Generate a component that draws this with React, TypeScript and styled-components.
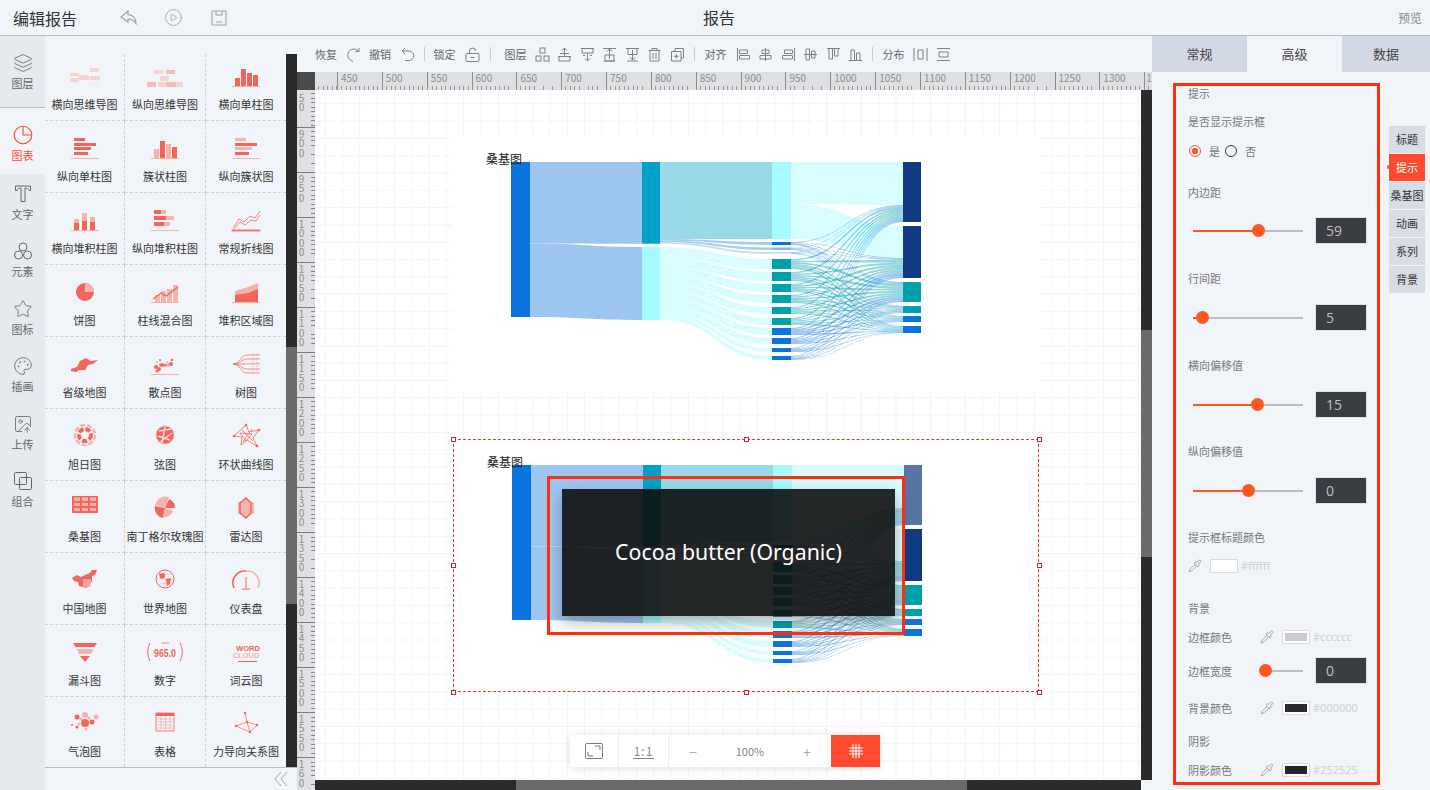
import React, { ReactNode } from "react";
import styled, { createGlobalStyle } from "styled-components";
import { Layers, Star, Palette, ImageUp, Pipette, CirclePlay } from "lucide-react";

const R = "#f2655a";
const L = "#f6b3ad";
const P = "#f5d3d0";

const Global = createGlobalStyle`
  html, body { margin: 0; padding: 0; height: 100%; overflow: hidden; }
  body { font-family: "Noto Sans CJK SC", "Noto Sans", sans-serif; background: #f1f4f9; }
  * { box-sizing: border-box; }
`;

const Page = styled.div`
  width: 1430px; height: 790px; display: flex; flex-direction: column; overflow: hidden; background: #f1f4f9;
`;
const Header = styled.header`
  height: 36px; flex: none; display: flex; align-items: center; position: relative;
  border-bottom: 1px solid #b9bcc1; padding: 0 8px 0 13px; color: #999;
`;
const AppTitle = styled.h1`
  margin: 0 41px 0 0; font-size: 16px; font-weight: 400; color: #333; line-height: 36px; width: 65px; white-space: nowrap;
`;
const HeadIcon = styled.span`
  display: flex; width: 19px; height: 19px; margin-right: 26px; align-items: center; justify-content: center; color: #a3a3a3;
`;
const PageName = styled.div`
  flex: 1; text-align: center; font-size: 16px; color: #333; padding-right: 214px; padding-bottom: 1px;
`;
const Preview = styled.div`font-size: 12px; color: #8a8a8a;`;
const Body = styled.div`flex: 1; display: flex; min-height: 0;`;

const Nav = styled.nav`width: 45px; flex: none; background: #e6e9ee; display: flex; flex-direction: column;`;
const NavItem = styled.div<{ $h: number; $pad: number; $active?: boolean; $line?: boolean }>`
  height: ${p => p.$h}px; padding-top: ${p => p.$pad}px; display: flex; flex-direction: column; align-items: center;
  gap: 3px; font-size: 11px; line-height: 14px; color: ${p => (p.$active ? "#ff4a30" : "#666")};
  background: ${p => (p.$active ? "#f1f4f9" : "transparent")};
  border-bottom: ${p => (p.$line ? "1px solid #b9bcc1" : "none")};
  svg { display: block; }
`;

const PaletteCol = styled.aside`width: 252px; flex: none; display: flex; flex-direction: column; padding-top: 18px;`;
const PaletteMain = styled.div`flex: 1; min-height: 0; display: flex;`;
const ChartGrid = styled.div`
  width: 241px; display: grid; grid-template-columns: 80px 81px 80px; grid-template-rows: 66.5px repeat(8, 72px) 70.5px;
`;
const ChartCell = styled.div<{ $last: boolean; $bottom: boolean }>`
  display: flex; flex-direction: column; align-items: center; justify-content: flex-end; padding-bottom: 8px;
  border-right: ${p => (p.$last ? "none" : "1px dashed #cfd1d6")};
  border-bottom: ${p => (p.$bottom ? "none" : "1px dashed #cfd1d6")};
  font-size: 11px; color: #333; white-space: nowrap;
  svg { display: block; margin-bottom: 6px; }
  span { line-height: 15px; height: 15px; }
`;
const ScrollV = styled.div<{ $before: number; $size: number }>`
  width: 11px; flex: none; background: #2b2b2b; display: flex; flex-direction: column;
  padding-top: ${p => p.$before}px;
  &::before { content: ""; display: block; height: ${p => p.$size}px; background: #6a6a6a; }
`;
const Collapse = styled.div`
  height: 23px; flex: none; border-top: 1px solid #b9bcc1; display: flex; align-items: center; justify-content: flex-end;
  padding-right: 9px; color: #a9a9a9;
`;

const Center = styled.main`width: 855px; flex: none; display: flex; flex-direction: column;`;
const Toolbar = styled.div`
  height: 36px; flex: none; display: flex; align-items: center; padding-left: 18px; font-size: 11px; color: #666;
`;
const ToolGroup = styled.div<{ $gap: number }>`display: flex; align-items: center; gap: ${p => p.$gap}px;`;
const ToolLabel = styled.span<{ $mr?: number }>`width: 22px; white-space: nowrap; margin-right: ${p => p.$mr ?? 0}px;`;
const Sep = styled.i<{ $l: number; $r: number }>`
  display: block; width: 1px; height: 14px; background: #c9ccd1; margin: 0 ${p => p.$r}px 0 ${p => p.$l}px;
`;
const ToolSvg = styled.svg.attrs({ viewBox: "0 0 15 15", width: 15, height: 15 })`
  display: block; flex: none; fill: none; stroke: #808080; stroke-width: 1;
`;

const Work = styled.div`
  flex: 1; display: grid; grid-template-columns: 18px 826px 11px; grid-template-rows: 18px 690px 10px; min-height: 0;
`;
const Corner = styled.div`background: #4a4a4a;`;
const RulerTop = styled.div`
  grid-column: 2 / 4; background: #dfe0e3; display: flex;
`;
const TopCell = styled.div<{ $lead?: boolean; $tail?: boolean }>`
  flex: none; width: ${p => (p.$lead ? "22px" : p.$tail ? "7px" : "44.85px")}; height: 18px;
  border-left: ${p => (p.$lead ? "none" : "1px solid #8c8c8c")}; font-size: 10px; line-height: 12px; color: #8e8e8e;
  padding-left: ${p => (p.$tail ? "1px" : "3px")}; white-space: nowrap;
  background: repeating-linear-gradient(90deg, transparent 0 3.5px, #999 3.5px 4.5px) left bottom / 100% 4px no-repeat;
`;
const RulerLeft = styled.div`
  grid-row: 2 / 4; background: #dfe0e3; overflow: hidden;
`;
const LeftCell = styled.div<{ $lead?: boolean; $tail?: boolean }>`
  height: ${p => (p.$lead ? 37 : p.$tail ? 33 : 45)}px; border-top: ${p => (p.$lead ? "none" : "1px solid #7a7a7a")};
  font-size: 10px; color: #8e8e8e; line-height: 9.4px; padding: ${p => (p.$lead ? "3px" : "1px")} 0 0 0;
  background: repeating-linear-gradient(180deg, transparent 0 3.5px, #888 3.5px 4.5px) right top / 4px 100% no-repeat;
  span { display: block; width: 9px; word-break: break-all; text-align: center; }
`;
const Canvas = styled.div`
  position: relative; overflow: hidden; background-color: #fff;
  background-image: linear-gradient(#f2f4f9 1px, transparent 1px), linear-gradient(90deg, #f2f4f9 1px, transparent 1px);
  background-size: 17.3px 17.3px; background-position: 9.7px 13.3px;
`;
const ScrollH = styled.div`
  background: #2b2b2b; display: flex; padding-left: 201px;
  &::before { content: ""; display: block; width: 451px; background: #6a6a6a; }
`;
const Widget = styled.div<{ $x: number; $y: number; $selected?: boolean }>`
  position: absolute; left: ${p => p.$x}px; top: ${p => p.$y}px; width: 586px; height: 253px; background: #fff;
  outline: ${p => (p.$selected ? "1px dashed #e8372c" : "none")}; outline-offset: -1px;
  svg { display: block; }
`;
const Handle = styled.i<{ $x: number; $y: number }>`
  position: absolute; left: ${p => p.$x}%; top: ${p => p.$y}%; width: 5px; height: 5px; margin: -2.5px 0 0 -2.5px;
  background: #fff; border: 1px solid #e02020;
`;
const Tip = styled.div`
  position: absolute; left: 109px; top: 50px; width: 333px; height: 127px; background: rgba(12, 12, 12, 0.89);
  box-shadow: 0 6px 14px rgba(37, 37, 37, 0.35); display: flex; align-items: center; justify-content: center;
  color: #fff; font-family: "Noto Sans", sans-serif; font-size: 21.3px; padding-bottom: 3px;
`;
const Mark = styled.div`
  position: absolute; left: 94px; top: 37px; width: 358px; height: 159px; border: 3px solid #ff2f0a;
`;
const ZoomBar = styled.div`
  position: absolute; left: 255px; top: 645px; width: 310px; height: 32px; background: #fff; display: flex; align-items: stretch;
  box-shadow: 0 1px 8px rgba(0, 0, 0, 0.12); color: #888; font-size: 11px;
`;
const ZoomCell = styled.div<{ $w: number; $line?: boolean; $on?: boolean }>`
  width: ${p => p.$w}px; flex: none; display: flex; align-items: center; justify-content: center;
  border-right: ${p => (p.$line ? "1px solid #ececec" : "none")};
  background: ${p => (p.$on ? "#ff4a30" : "transparent")};
`;
const OneToOne = styled.span`
  font-size: 12px; color: #888; border-bottom: 1px solid #888; line-height: 14px; letter-spacing: 1px; padding: 0 1px;
`;
const ZoomSign = styled.span`font-size: 15px; color: #999; font-weight: 300; width: 48px; text-align: center;`;
const ZoomValue = styled.span`width: 66px; text-align: center; color: #888;`;

const Right = styled.section`width: 278px; flex: none; display: flex; flex-direction: column;`;
const Tabs = styled.div`height: 36px; flex: none; display: grid; grid-template-columns: 95px 95px 88px;`;
const Tab = styled.div<{ $on?: boolean }>`
  display: flex; align-items: center; justify-content: center; font-size: 13px; color: #444; padding-bottom: 2px;
  background: ${p => (p.$on ? "#f1f4f9" : "#d3d9e4")};
`;
const Panel = styled.div`flex: 1; display: flex; position: relative; min-height: 0;`;
const Form = styled.div`width: 237px; flex: none; padding: 14px 0 0 36px; font-size: 11px; color: #777;`;
const Field = styled.div<{ $mt: number; $h?: number }>`
  margin-top: ${p => p.$mt}px; height: ${p => p.$h ?? 16}px; display: flex; align-items: center; line-height: 14px; white-space: nowrap;
  padding-bottom: ${p => (p.$h ? 0 : 2)}px;
`;
const Radio = styled.i<{ $on?: boolean }>`
  display: block; width: 12px; height: 12px; border-radius: 50%; flex: none; margin: 0 8px 0 ${p => (p.$on ? 1 : 0)}px;
  border: 1.5px solid ${p => (p.$on ? "#ff5a2e" : "#333")};
  background: ${p => (p.$on ? "radial-gradient(circle, #ff5a2e 0 3px, transparent 3.3px)" : "transparent")};
`;
const RadioText = styled.span`margin-right: 4px; color: #777; width: 12px;`;
const SliderWrap = styled.div<{ $w: number; $ml: number }>`
  position: relative; width: ${p => p.$w}px; height: 2px; flex: none; margin-left: ${p => p.$ml}px; background: #bdbdbd;
`;
const SliderFill = styled.i<{ $p: number }>`
  position: absolute; left: 0; top: 0; height: 2px; width: ${p => p.$p}px; background: #ff5722;
`;
const SliderKnob = styled.i<{ $p: number }>`
  position: absolute; left: ${p => p.$p}px; top: 50%; width: 13px; height: 13px; margin: -6.5px 0 0 -6.5px; border-radius: 50%; background: #ff5722;
`;
const NumBox = styled.div<{ $ml: number }>`
  width: 52px; height: 27px; margin-left: ${p => p.$ml}px; flex: none; background: #3a3d42; border: 1px solid #e0e2e6; color: #c0c0c0;
  font-family: "Open Sans", sans-serif; font-size: 14px; line-height: 25px; padding-left: 10px;
`;
const FieldLabel = styled.span`width: 72px; flex: none;`;
const PickIcon = styled.span`display: flex; width: 14px; margin-right: 8px; color: #777;`;
const Swatch = styled.span<{ $c: string }>`
  display: block; width: 28px; height: 14px; flex: none; border: 1px solid #dcdcdc; background: #fff; padding: 2px;
  margin-right: 3px;
  &::before { content: ""; display: block; height: 100%; background: ${p => p.$c}; }
`;
const Hex = styled.span`color: #cfcfcf; font-size: 11px; font-family: "Open Sans", sans-serif;`;
const SideTabs = styled.div`width: 36px; flex: none; padding-top: 54px; display: flex; flex-direction: column; gap: 1px;`;
const SideTab = styled.div<{ $on?: boolean }>`
  height: 27px; display: flex; align-items: center; justify-content: center; font-size: 11px; white-space: nowrap; position: relative; padding-bottom: 2px;
  background: ${p => (p.$on ? "#ff4a30" : "#d8dce4")}; color: ${p => (p.$on ? "#fff" : "#333")};
  &::before { content: ${p => (p.$on ? '""' : "none")}; position: absolute; left: -2px; top: 11px; width: 4px; height: 4px; border-radius: 50%; background: #ff4a30; }
`;
const PanelMark = styled.div`
  position: absolute; left: 21px; top: 11px; width: 207px; height: 702px; border: 3px solid #ff2f0a; pointer-events: none;
`;

/* palette thumbnails */
const bars = (items: [number, number, number, number, string][]) =>
  items.map(([x, y, w, h, c], i) => <rect key={i} x={x} y={y} width={w} height={h} fill={c} />);
const Base = () => <rect x="6" y="25" width="28" height="1" fill={L} />;

const thumbs: Record<string, ReactNode> = {
  mindH: (
    <g fill={P}>
      {bars([[5, 12, 9, 3, P], [5, 17, 9, 4, P], [14, 14, 10, 5, P], [25, 7, 9, 4, P], [25, 15, 10, 4, P], [25, 21, 9, 3, "#faeae8"]])}
    </g>
  ),
  mindV: (
    <g>{bars([[9, 9, 9, 4, P], [21, 9, 9, 4, "#f0bdb8"], [15, 15, 9, 5, P], [2, 21, 9, 5, "#f0bdb8"], [13, 21, 9, 5, P], [21, 21, 10, 5, "#f0bdb8"], [31, 21, 7, 5, P]])}</g>
  ),
  barV: <g><Base />{bars([[9, 17, 5, 8, R], [15, 8, 5, 17, R], [21, 12, 5, 13, R], [27, 14, 5, 11, R]])}</g>,
  barH: <g><Base />{bars([[9, 5, 11, 3, R], [9, 10, 22, 3, R], [9, 14, 17, 3, R], [9, 19, 14, 3, R]])}</g>,
  cluster: <g><Base />{bars([[9, 16, 5, 9, L], [15, 8, 5, 17, R], [21, 11, 5, 14, L], [27, 14, 5, 11, R]])}</g>,
  clusterH: <g><Base />{bars([[9, 5, 11, 3, L], [9, 10, 22, 3, R], [9, 14, 17, 3, L], [9, 19, 14, 3, R]])}</g>,
  stackV: <g><Base />{bars([[9, 14, 5, 4, L], [9, 18, 5, 7, R], [17, 8, 5, 8, L], [17, 16, 5, 9, R], [25, 12, 5, 5, L], [25, 17, 5, 8, R]])}</g>,
  stackH: <g><Base />{bars([[9, 5, 7, 4, R], [16, 5, 5, 4, L], [9, 11, 12, 4, R], [21, 11, 8, 4, L], [9, 17, 10, 4, R], [19, 17, 6, 4, L]])}</g>,
  line: (
    <g fill="none" stroke={R} strokeWidth="0.8">
      <Base />
      <path d="M7 23 13 14 18 17 24 11 29 13 34 6" />
      <path d="M7 25 14 17 19 20 25 15 30 16 34 10" />
    </g>
  ),
  pie: <g><circle cx="20" cy="15" r="9" fill={R} /><path d="M20 6a9 9 0 0 1 9 9h-9z" fill={L} /></g>,
  mixed: (
    <g><Base />{bars([[10, 18, 5, 7, L], [16, 14, 5, 11, L], [22, 12, 5, 13, L], [28, 8, 5, 17, L]])}<path d="M8 22 16 16 21 19 33 10" fill="none" stroke={R} strokeWidth="1.2" /></g>
  ),
  area: <g><Base /><path d="M9 14 22 10 32 6V25H9z" fill={L} /><path d="M9 18 22 16 32 12V25H9z" fill={R} /></g>,
  province: <path d="M6 20 12 18 15 12 21 9 24 11 26 12 33 11 28 15 23 16 20 21 14 21 11 23 6 22z" fill={R} />,
  scatter: (
    <g fill={R}>
      <Base />
      {[[11,18,2],[14,20,2],[15,16,1.5],[17,16,2],[20,16,1.5],[23,16,2],[26,15,2],[12,22,1.5],[12,13,1],[27,11,1.3],[15,11,1],[22,13,1]].map(([x,y,r],i)=>(<circle key={i} cx={x} cy={y} r={r} opacity={i%3===2?0.5:1} />))}
    </g>
  ),
  tree: (
    <g fill="none" stroke={R} strokeWidth="0.7">
      <path d="M7 15C14 15 15 6 21 6H34M7 15C14 15 16 10 21 10H34M7 15H34M7 15C14 15 16 20 21 20H34M7 15C14 15 15 24 21 24H34" />
      <path d="M27 5v20M31 5v20" strokeDasharray="1 3" />
    </g>
  ),
  sunburst: (
    <g fill="none">
      <circle cx="20" cy="14" r="6" stroke={R} strokeWidth="4" strokeDasharray="5 2" />
      <circle cx="20" cy="14" r="10" stroke={L} strokeWidth="2.5" strokeDasharray="5 2" />
    </g>
  ),
  chord: (
    <g><circle cx="20" cy="14" r="9" fill={R} /><path d="M14 10 26 8M13 15 25 19M20 6 17 22M27 12 15 21" stroke="#fbd9d6" strokeWidth="1.4" /><circle cx="20" cy="14" r="9" fill="none" stroke={L} strokeWidth="1" /></g>
  ),
  ring: (
    <g fill="none" stroke={R} strokeWidth="0.8">
      <path d="M8 15 20 4 23 11 33 9 27 17 31 25 21 19 15 24 16 16z" />
      <path d="M14 12 26 13 20 20zM16 9 27 20M26 8 17 21" />
      <circle cx="20" cy="4" r="1" fill={R} /><circle cx="8" cy="15" r="1" fill={R} /><circle cx="33" cy="9" r="1" fill={R} /><circle cx="31" cy="25" r="1" fill={R} />
    </g>
  ),
  sankey: (
    <g>
      {bars([[7, 3, 26, 17, L], [7, 3, 2, 17, R], [15, 3, 2, 17, R], [23, 3, 2, 17, R], [31, 3, 2, 17, R], [7, 3, 26, 1.5, R], [7, 8, 26, 2, R], [7, 13, 26, 2, R], [7, 18, 26, 2, R]])}
    </g>
  ),
  rose: (
    <g><path d="M20 15 30 15A10 10 0 0 0 24 6z" fill={R} /><path d="M20 15 24 4A11 11 0 0 0 10 12z" fill={L} /><path d="M20 15 10 13A10 10 0 0 0 18 25z" fill={R} /><path d="M20 15 18 24A9 9 0 0 0 28 18z" fill={L} /></g>
  ),
  radar: (
    <g><path d="M20 5 28 10V20L20 25 12 20V10z" fill={L} /><path d="M20 5 25 10V20L20 25 14 20V10z" fill={L} stroke={R} strokeWidth="1.4" /></g>
  ),
  china: (
    <g fill={R}>
      <path d="M7 13 12 10 16 12 20 10 25 8 27 5 32 5 30 10 27 11 27 16 24 21 21 23 18 22 14 21 13 17 9 16z" />
      <path d="M18 14h8v8h-8z" fill={L} opacity="0.8" />
    </g>
  ),
  world: (
    <g><circle cx="20" cy="14" r="9" fill="none" stroke={R} strokeWidth="1" /><path d="M11 14h18M20 5v18M13 8c4 2 10 2 14 0M13 20c4-2 10-2 14 0" stroke={L} strokeWidth="0.6" fill="none" /><path d="M14 9 19 8 20 12 17 14 15 13zM21 14 26 13 25 19 22 21z" fill={R} /></g>
  ),
  gauge: (
    <g fill="none"><path d="M8 23A12 12 0 0 1 20 6" stroke={R} strokeWidth="1.5" /><path d="M20 6A12 12 0 0 1 32 23" stroke={L} strokeWidth="1.5" /><path d="M20 12V23M16 24H24" stroke={R} strokeWidth="1" /></g>
  ),
  funnel: (
    <g><path d="M8 6H32L29.5 10H10.5z" fill={R} /><path d="M11.5 12H28.5L26 17H14z" fill={L} /><path d="M15 19H25L20 25z" fill={R} /></g>
  ),
  number: (
    <g fill="none" stroke={R} strokeWidth="1">
      <path d="M5 6C2 12 2 18 5 24M35 6C38 12 38 18 35 24" />
      <path d="M16 6H24" strokeWidth="1.6" stroke={L} />
      <text x="20" y="20" textAnchor="middle" fill={R} stroke="none" fontSize="11" fontWeight="700" textLength="22" lengthAdjust="spacingAndGlyphs" fontFamily="Liberation Sans, sans-serif">965.0</text>
    </g>
  ),
  cloud: (
    <g>
      <text x="22" y="14" textAnchor="middle" fill={R} fontSize="7.5" fontWeight="700" fontFamily="Liberation Sans, sans-serif">WORD</text>
      <text x="20" y="21" textAnchor="middle" fill={L} fontSize="7.5" fontWeight="700" fontFamily="Liberation Sans, sans-serif">CLOUD</text>
      <rect x="12" y="24" width="19" height="1" fill={R} />
    </g>
  ),
  bubble: (
    <g>
      {[[20,15,4,R],[12,9,2.5,R],[20,7,3,L],[31,9,2.5,L],[27,14,2.5,R],[16,11,1.5,L],[24,10,1.5,L],[12,19,1.5,R],[7,17,1,R],[14,16,1.5,L],[21,21,1.5,L]].map(([x,y,r,c],i)=>(<circle key={i} cx={x as number} cy={y as number} r={r as number} fill={c as string} />))}
    </g>
  ),
  table: (
    <g><rect x="11" y="5" width="18" height="18" fill="none" stroke={R} strokeWidth="0.8" /><rect x="11" y="5" width="18" height="3" fill={R} />
      <path d="M11 11H29M11 14H29M11 17H29M11 20H29M16 8V23M20.500 8V23M25 8V23" stroke={L} strokeWidth="0.8" /></g>
  ),
  force: (
    <g stroke={R} strokeWidth="0.7" fill={R}>
      <path d="M19 5 21 14 10 18 24 24 31 17 21 14M21 14 24 24" fill="none" />
      {[[19,5],[21,14],[10,18],[24,24],[31,17]].map(([x,y],i)=>(<circle key={i} cx={x} cy={y} r="1.2" stroke="none" />))}
    </g>
  ),
};

const charts: [string, string][] = [
  ["mindH", "横向思维导图"], ["mindV", "纵向思维导图"], ["barV", "横向单柱图"],
  ["barH", "纵向单柱图"], ["cluster", "簇状柱图"], ["clusterH", "纵向簇状图"],
  ["stackV", "横向堆积柱图"], ["stackH", "纵向堆积柱图"], ["line", "常规折线图"],
  ["pie", "饼图"], ["mixed", "柱线混合图"], ["area", "堆积区域图"],
  ["province", "省级地图"], ["scatter", "散点图"], ["tree", "树图"],
  ["sunburst", "旭日图"], ["chord", "弦图"], ["ring", "环状曲线图"],
  ["sankey", "桑基图"], ["rose", "南丁格尔玫瑰图"], ["radar", "雷达图"],
  ["china", "中国地图"], ["world", "世界地图"], ["gauge", "仪表盘"],
  ["funnel", "漏斗图"], ["number", "数字"], ["cloud", "词云图"],
  ["bubble", "气泡图"], ["table", "表格"], ["force", "力导向关系图"],
];

/* Sankey */
type Band = [number, number];
const ribbon = (x0: number, a: Band, x1: number, b: Band) => {
  const m = (x0 + x1) / 2;
  return `M${x0} ${a[0]}C${m} ${a[0]} ${m} ${b[0]} ${x1} ${b[0]}L${x1} ${b[1]}C${m} ${b[1]} ${m} ${a[1]} ${x0} ${a[1]}Z`;
};
const teal = "#00a0ad";
const blue = "#0b74de";
const cyan = "#a5fbff";
const mids: { b: Band; c: string }[] = [
  { b: [242, 245], c: blue }, { b: [247.5, 250], c: "#8ab4ec" }, { b: [252, 254], c: "#cfe0f6" },
  { b: [259, 269], c: teal }, { b: [272, 281], c: teal }, { b: [284, 292], c: teal }, { b: [295, 303], c: teal },
  { b: [307, 314], c: teal }, { b: [318, 325], c: teal },
  { b: [328, 335], c: blue }, { b: [338, 344], c: blue }, { b: [348, 352], c: blue }, { b: [356, 360], c: blue },
];
const ends: { b: Band; c: string; slot: Band }[] = [
  { b: [162, 222], c: "#103a82", slot: [205, 222] },
  { b: [226, 278], c: "#103a82", slot: [258, 278] },
  { b: [282, 302], c: teal, slot: [282, 302] },
  { b: [306, 313], c: teal, slot: [306, 313] },
  { b: [316, 322], c: blue, slot: [316, 322] },
  { b: [326, 333], c: blue, slot: [326, 333] },
];

const Sankey = ({ faded }: { faded?: boolean }) => {
  const totalMid = mids.reduce((s, m) => s + (m.b[1] - m.b[0]), 0);
  const fan = mids.slice(3);
  const fanTotal = fan.reduce((s, m) => s + (m.b[1] - m.b[0]), 0);
  let cursor = 247;
  const fanLinks = fan.map(m => {
    const h = ((m.b[1] - m.b[0]) / fanTotal) * 73;
    const a: Band = [cursor, cursor + h];
    cursor += h;
    return ribbon(660, a, 772, m.b);
  });
  const endCursor = ends.map(e => e.slot[0]);
  const thin = mids.flatMap((m, si) => {
    const h = (m.b[1] - m.b[0]) / ends.length;
    return ends.map((e, ei) => {
      const th = ((e.slot[1] - e.slot[0]) * (m.b[1] - m.b[0])) / totalMid;
      const a: Band = [m.b[0] + h * ei, m.b[0] + h * (ei + 1)];
      const b: Band = [endCursor[ei], endCursor[ei] + th];
      endCursor[ei] += th;
      return { d: ribbon(791, a, 903, b), c: m.c === teal ? teal : blue, key: `${si}-${ei}` };
    });
  });
  return (
    <svg width="586" height="253" viewBox="452 136 586 253">
      <path d={ribbon(530, [162, 243.5], 642, [162, 243.7])} fill="#9cc5f0" />
      <path d={ribbon(530, [243.5, 317], 642, [247, 320])} fill="#9cc5f0" />
      <path d={ribbon(660, [162, 239], 772, [162, 239])} fill="#9ad9e9" />
      <path d={ribbon(660, [239, 240.5], 772, [242, 245])} fill="#a9cdec" />
      <path d={ribbon(660, [240.5, 242], 772, [247.5, 250])} fill="#a9cdec" />
      <path d={ribbon(660, [242, 243.7], 772, [252, 254])} fill="#c5e2f0" />
      {fanLinks.map((d, i) => <path key={i} d={d} fill="#d9fdff" />)}
      <path d={ribbon(791, [162, 204], 903, [162, 205])} fill="#d8fdff" />
      <path d={ribbon(791, [204, 239], 903, [226, 258])} fill="#d8fdff" />
      {thin.map(t => <path key={t.key} d={t.d} fill={t.c} opacity={0.42} />)}
      <rect x="511" y="162" width="19" height="155" fill={blue} />
      <rect x="642" y="162" width="18" height="81.7" fill="#00a2c9" />
      <rect x="642" y="247" width="18" height="73" fill={cyan} />
      <rect x="772" y="162" width="19" height="77" fill={cyan} />
      {mids.map((m, i) => <rect key={i} x="772" y={m.b[0]} width="19" height={m.b[1] - m.b[0]} fill={m.c} />)}
      {ends.map((e, i) => (
        <rect key={i} x="903" y={e.b[0]} width="18" height={e.b[1] - e.b[0]} fill={e.c} opacity={faded && i === 0 ? 0.7 : 1} />
      ))}
      <text x="486" y="164" fontSize="12" fill="#222">桑基图</text>
    </svg>
  );
};

const handles: [number, number][] = [[0, 0], [50, 0], [100, 0], [0, 50], [100, 50], [0, 100], [50, 100], [100, 100]];
const topTicks = Array.from({ length: 18 }, (_, i) => 450 + i * 50);
const leftTicks = Array.from({ length: 14 }, (_, i) => 900 + i * 50);

const Slider = ({ w = 110, ml = 5, at }: { w?: number; ml?: number; at: number }) => (
  <SliderWrap $w={w} $ml={ml}>
    <SliderFill $p={at} />
    <SliderKnob $p={at} />
  </SliderWrap>
);
const ColorRow = ({ mt, label, c, hex }: { mt: number; label: string; c: string; hex: string }) => (
  <Field $mt={mt}>
    <FieldLabel>{label}</FieldLabel>
    <PickIcon><Pipette size={14} strokeWidth={1} /></PickIcon>
    <Swatch $c={c} />
    <Hex>{hex}</Hex>
  </Field>
);

export default function App() {
  return (
    <Page>
      <Global />
      <Header>
        <AppTitle>编辑报告</AppTitle>
        <HeadIcon>
          <svg width="18" height="15" viewBox="0 0 18 15" fill="none" stroke="currentColor" strokeWidth="1.2">
            <path d="M8 1 1 7l7 5V9.200c3 0 6 .8 8 4.300 0-5-3-8.500-8-8.800z" />
          </svg>
        </HeadIcon>
        <HeadIcon><CirclePlay size={19} strokeWidth={1.1} /></HeadIcon>
        <HeadIcon>
          <svg width="16" height="16" viewBox="0 0 16 16" fill="none" stroke="currentColor" strokeWidth="1.1">
            <path d="M1 1h14v14H1zM5 1v4h6V1M5 12h6" />
          </svg>
        </HeadIcon>
        <PageName>报告</PageName>
        <Preview>预览</Preview>
      </Header>
      <Body>
        <Nav>
          <NavItem $h={72} $pad={17} $line><Layers size={20} strokeWidth={1} /><span>图层</span></NavItem>
          <NavItem $h={65.5} $pad={17} $active>
            <svg width="20" height="20" viewBox="0 0 20 20" fill="none" stroke="currentColor" strokeWidth="1.100">
              <circle cx="10" cy="10" r="8.800" /><path d="M10 1.500V10H18.500" />
            </svg>
            <span>图表</span>
          </NavItem>
          <NavItem $h={57.6} $pad={10}>
            <svg width="20" height="20" viewBox="0 0 20 20" fill="none" stroke="currentColor" strokeWidth="1">
              <path d="M2.500 2h15v4.500h-1.500C15.500 4.500 14 4 12 4v13.500H8V4C6 4 4.500 4.500 4 6.500H2.500z" />
            </svg>
            <span>文字</span>
          </NavItem>
          <NavItem $h={57.6} $pad={10}>
            <svg width="20" height="20" viewBox="0 0 20 20" fill="none" stroke="currentColor" strokeWidth="1">
              <circle cx="10" cy="6" r="4" /><circle cx="5.500" cy="14" r="4" /><circle cx="14.500" cy="14" r="4" />
            </svg>
            <span>元素</span>
          </NavItem>
          <NavItem $h={57.6} $pad={10}><Star size={20} strokeWidth={1} /><span>图标</span></NavItem>
          <NavItem $h={57.6} $pad={10}><Palette size={20} strokeWidth={1} /><span>插画</span></NavItem>
          <NavItem $h={57.6} $pad={10}><ImageUp size={20} strokeWidth={1} /><span>上传</span></NavItem>
          <NavItem $h={57.6} $pad={10}>
            <svg width="20" height="20" viewBox="0 0 20 20" fill="none" stroke="currentColor" strokeWidth="1">
              <rect x="1.500" y="1.500" width="12" height="12" rx="1" /><rect x="6.500" y="6.500" width="12" height="12" rx="1" />
            </svg>
            <span>组合</span>
          </NavItem>
        </Nav>
        <PaletteCol>
          <PaletteMain>
            <ChartGrid>
              {charts.map(([k, name], i) => (
                <ChartCell key={k} $last={i % 3 === 2} $bottom={i >= 27}>
                  <svg width="40" height="30" viewBox="0 0 40 30">{thumbs[k]}</svg>
                  <span>{name}</span>
                </ChartCell>
              ))}
            </ChartGrid>
            <ScrollV $before={293} $size={257} />
          </PaletteMain>
          <Collapse>
            <svg width="14" height="16" viewBox="0 0 14 16" fill="none" stroke="currentColor" strokeWidth="1">
              <path d="M7 1 1 8l6 7M13 1 7 8l6 7" />
            </svg>
          </Collapse>
        </PaletteCol>
        <Center>
          <Toolbar>
            <ToolGroup $gap={8.5}>
              <ToolLabel>恢复</ToolLabel>
              <ToolSvg><path d="M12.500 4.500C11 2 8 1.500 5.500 2.500 2 4 1 8 2.500 11c1 2 3 3 4.500 3.500M13 1v3.500H9.500" /></ToolSvg>
              <ToolLabel>撤销</ToolLabel>
              <ToolSvg><path d="M5 1 2 4l3 3M2 4h7a4.500 4.500 0 0 1 0 9.500H5" /></ToolSvg>
            </ToolGroup>
            <Sep $l={9} $r={9} />
            <ToolGroup $gap={9}>
              <ToolLabel>锁定</ToolLabel>
              <ToolSvg><rect x="1" y="6.500" width="13" height="8" rx="1" /><path d="M4.500 6.500V4a3 3 0 0 1 6 0M5.500 10.500h4" /></ToolSvg>
            </ToolGroup>
            <Sep $l={10} $r={14} />
            <ToolLabel $mr={8}>图层</ToolLabel>
            <ToolGroup $gap={7.5}>
              <ToolSvg><rect x="5" y="1" width="5" height="5" /><rect x="1" y="9" width="5" height="5" /><rect x="9" y="9" width="5" height="5" /></ToolSvg>
              <ToolSvg><path d="M7.500 1v8M5 3.500 7.500 1 10 3.500M3 6.500h9M1 9.500h13M2 14h11v-4.500H2z" /></ToolSvg>
              <ToolSvg><path d="M1 1.500h13M2 1.500v4.500h11V1.500M7.500 14V6M5 11.500 7.500 14 10 11.500M3 8.500h2M10 8.500h2" /></ToolSvg>
              <ToolSvg><path d="M1 1.500h13M7.500 12V2M5 4.500l2.500-2.500L10 4.500M2 14h11M3 8h9v6H3z" /></ToolSvg>
              <ToolSvg><path d="M1 1.500h13M3 1.500v6h9v-6M7.500 3v10M5 10.500 7.500 13 10 10.500M2 14h11" /></ToolSvg>
              <ToolSvg><path d="M1.500 3.500h12M5 3.500V1.500h5v2M3 3.500V14h9V3.500M6 6v6M9 6v6" /></ToolSvg>
              <ToolSvg><path d="M5 4V1.500h8.500V11H11M1.500 4.500h9.500V14H1.500zM6.250 7v4.500M4 9.250h4.500" /></ToolSvg>
            </ToolGroup>
            <Sep $l={9} $r={10} />
            <ToolLabel $mr={9}>对齐</ToolLabel>
            <ToolGroup $gap={7.5}>
              <ToolSvg><path d="M1.500 1v13M3.500 3h8v3.500h-8zM3.500 8.500h10V12h-10z" /></ToolSvg>
              <ToolSvg><path d="M7.500 1v13M4 3h7v3.500H4zM2 8.500h11V12H2z" /></ToolSvg>
              <ToolSvg><path d="M13.500 1v13M3.500 3h8v3.500h-8zM1.500 8.500h10V12h-10z" /></ToolSvg>
              <ToolSvg><path d="M1 7.500h13M3 2h3.500v11H3zM8.500 4H12v7H8.500z" /></ToolSvg>
              <ToolSvg><path d="M1 1.500h13M3 1.500h3.500V12H3zM8.500 1.500H12V9H8.500z" /></ToolSvg>
              <ToolSvg><path d="M1 13.500h13M3 3h3.500v10.500H3zM8.500 6H12v7.500H8.500z" /></ToolSvg>
            </ToolGroup>
            <Sep $l={8.5} $r={10} />
            <ToolLabel $mr={8}>分布</ToolLabel>
            <ToolGroup $gap={8}>
              <ToolSvg><path d="M1 1v13M14 1v13M5 3h5v9H5z" /></ToolSvg>
              <ToolSvg><path d="M1 1.500h13M1 13.500h13M3 5h9v5H3z" /></ToolSvg>
            </ToolGroup>
          </Toolbar>
          <Work>
            <Corner />
            <RulerTop>
              <TopCell $lead />
              {topTicks.map(t => <TopCell key={t}>{t}</TopCell>)}
              <TopCell $tail>1</TopCell>
            </RulerTop>
            <RulerLeft>
              <LeftCell $lead><span>50</span></LeftCell>
              {leftTicks.map(t => <LeftCell key={t}><span>{t}</span></LeftCell>)}
              <LeftCell $tail><span>160</span></LeftCell>
            </RulerLeft>
            <Canvas>
              <Widget $x={137} $y={46}><Sankey /></Widget>
              <Widget $x={138} $y={349} $selected>
                <Sankey faded />
                {handles.map(([x, y]) => <Handle key={`${x}-${y}`} $x={x} $y={y} />)}
                <Tip>Cocoa butter (Organic)</Tip>
                <Mark />
              </Widget>
              <ZoomBar>
                <ZoomCell $w={49} $line>
                  <svg width="18" height="16" viewBox="0 0 18 16" fill="none" stroke="#777" strokeWidth="1">
                    <rect x="0.500" y="0.500" width="17" height="15" rx="1" /><path d="M3 9v4h5M15 7V3h-5" />
                  </svg>
                </ZoomCell>
                <ZoomCell $w={50} $line><OneToOne>1:1</OneToOne></ZoomCell>
                <ZoomCell $w={162}>
                  <ZoomSign>−</ZoomSign><ZoomValue>100%</ZoomValue><ZoomSign>+</ZoomSign>
                </ZoomCell>
                <ZoomCell $w={49} $on>
                  <svg width="14" height="14" viewBox="0 0 14 14" stroke="#fff" strokeWidth="1.100">
                    <path d="M4 0v14M7 0v14M10 0v14M0 4h14M0 7h14M0 10h14" />
                  </svg>
                </ZoomCell>
              </ZoomBar>
            </Canvas>
            <ScrollV $before={240} $size={227} />
            <ScrollH />
          </Work>
        </Center>
        <Right>
          <Tabs>
            <Tab>常规</Tab>
            <Tab $on>高级</Tab>
            <Tab>数据</Tab>
          </Tabs>
          <Panel>
            <Form>
              <Field $mt={0}>提示</Field>
              <Field $mt={12}>是否显示提示框</Field>
              <Field $mt={14}>
                <Radio $on /><RadioText>是</RadioText>
                <Radio /><RadioText>否</RadioText>
              </Field>
              <Field $mt={25}>内边距</Field>
              <Field $mt={16} $h={27}><Slider at={65} /><NumBox $ml={12}>59</NumBox></Field>
              <Field $mt={27}>行间距</Field>
              <Field $mt={17} $h={27}><Slider at={9} /><NumBox $ml={12}>5</NumBox></Field>
              <Field $mt={27}>横向偏移值</Field>
              <Field $mt={17} $h={27}><Slider at={64} /><NumBox $ml={12}>15</NumBox></Field>
              <Field $mt={26}>纵向偏移值</Field>
              <Field $mt={17} $h={27}><Slider at={55} /><NumBox $ml={12}>0</NumBox></Field>
              <Field $mt={26}>提示框标题颜色</Field>
              <Field $mt={13}>
                <PickIcon><Pipette size={14} strokeWidth={1} /></PickIcon>
                <Swatch $c="#ffffff" /><Hex>#ffffff</Hex>
              </Field>
              <Field $mt={26}>背景</Field>
              <ColorRow mt={13} label="边框颜色" c="#cccccc" hex="#cccccc" />
              <Field $mt={11} $h={27}>
                <FieldLabel>边框宽度</FieldLabel>
                <Slider w={43} ml={0} at={5} />
                <NumBox $ml={12}>0</NumBox>
              </Field>
              <ColorRow mt={17} label="背景颜色" c="#2b2b2b" hex="#000000" />
              <Field $mt={17}>阴影</Field>
              <ColorRow mt={13} label="阴影颜色" c="#252525" hex="#252525" />
            </Form>
            <SideTabs>
              <SideTab>标题</SideTab>
              <SideTab $on>提示</SideTab>
              <SideTab>桑基图</SideTab>
              <SideTab>动画</SideTab>
              <SideTab>系列</SideTab>
              <SideTab>背景</SideTab>
            </SideTabs>
            <PanelMark />
          </Panel>
        </Right>
      </Body>
    </Page>
  );
}
